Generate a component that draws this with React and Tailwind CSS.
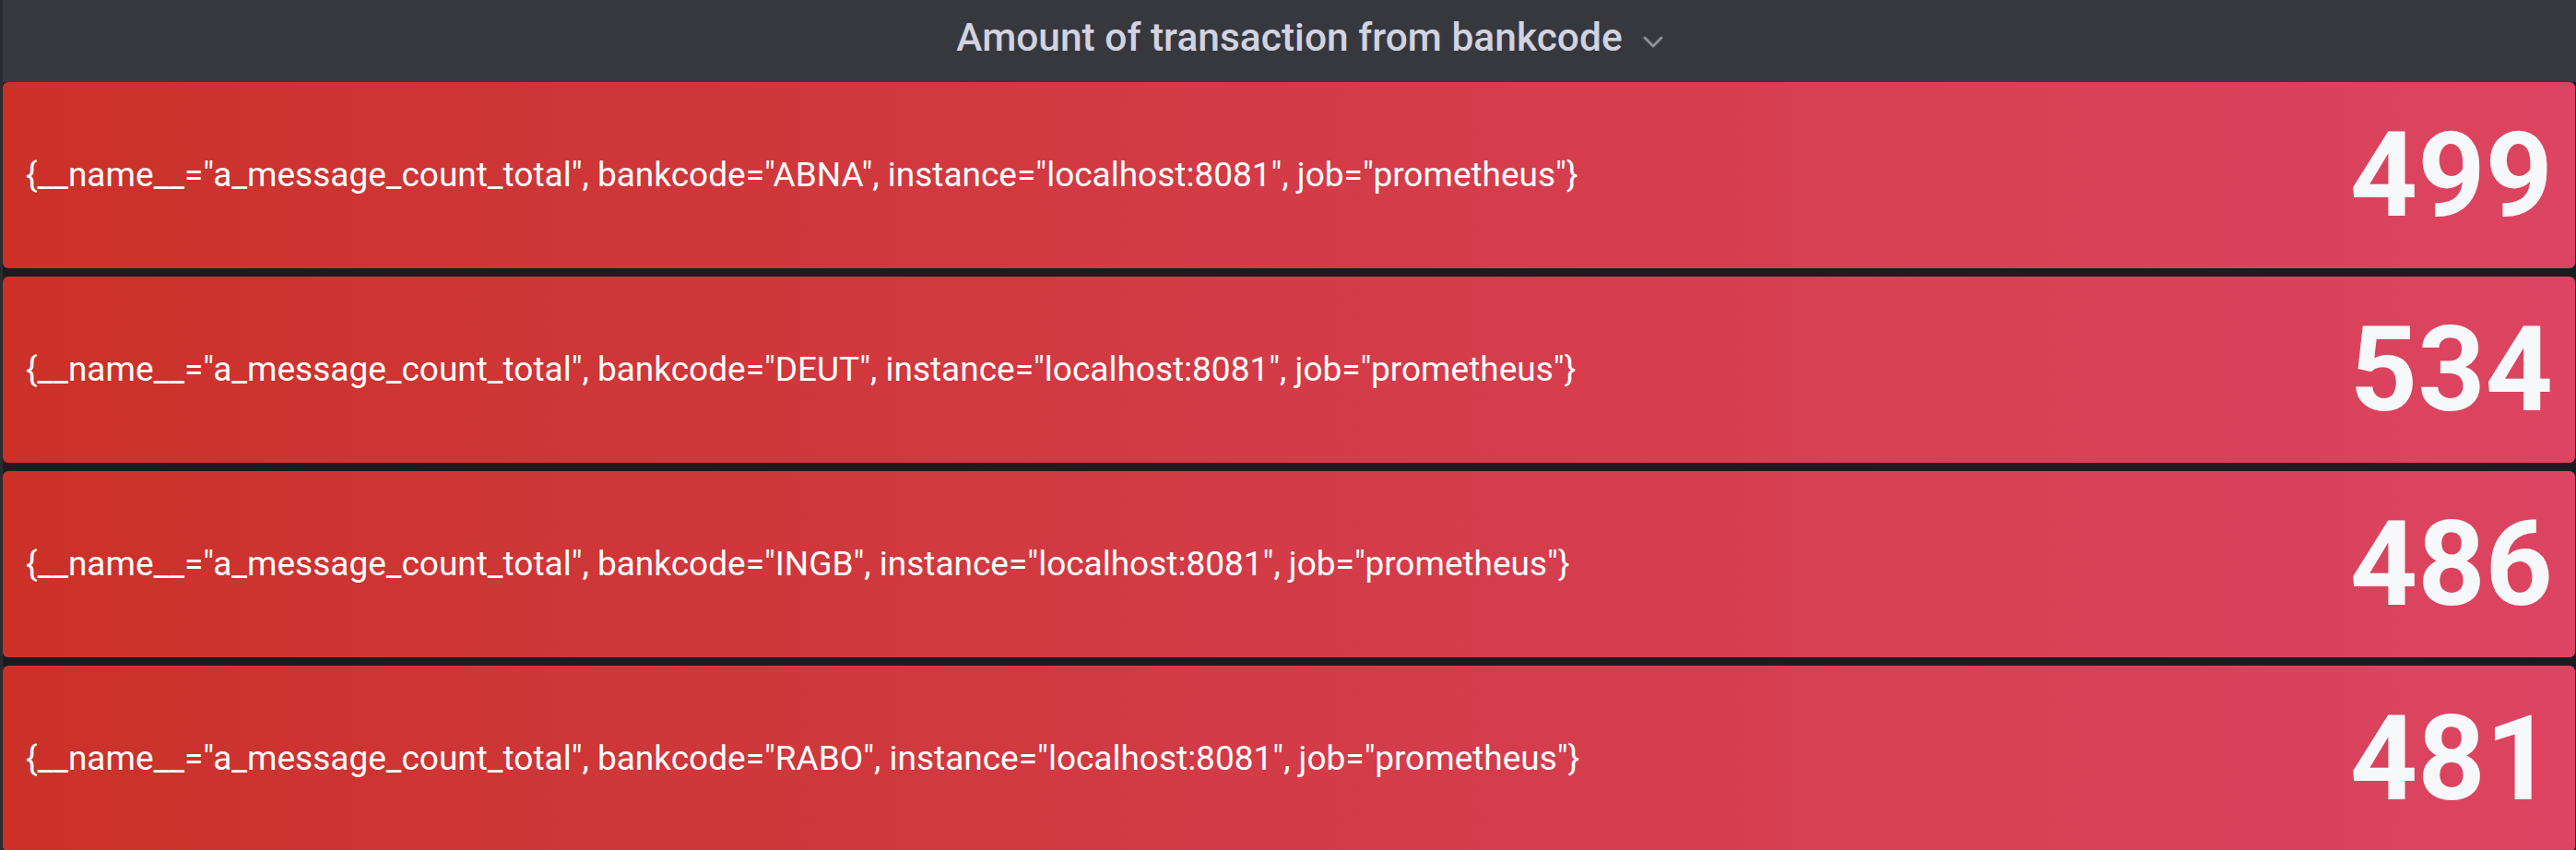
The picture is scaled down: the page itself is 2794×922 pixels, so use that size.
import React from "react";

const rows = [
  { code: "ABNA", value: "499" },
  { code: "DEUT", value: "534" },
  { code: "INGB", value: "486" },
  { code: "RABO", value: "481" },
];

export default function App() {
  return (
    <div className="w-[2794px] h-[922px] overflow-hidden bg-[#1b1c20] flex" style={{ fontFamily: "Roboto, 'Noto Sans', sans-serif" }}>
      <div className="w-[3px] shrink-0 bg-[#2a2b30]" />
      <div className="flex-1 flex flex-col">
        <div className="h-[89px] shrink-0 bg-[#37383e] flex items-center justify-center pb-[8px]">
          <span className="relative text-[42.5px] font-medium text-[#d2d3e0]">
            Amount of transaction from bankcode
            <svg className="absolute left-full top-1/2 ml-[22px] -translate-y-[2px]" width="22" height="13" viewBox="0 0 22 13" fill="none">
              <path d="M2 2 L11 11 L20 2" stroke="#8e8e96" strokeWidth="3" strokeLinecap="round" strokeLinejoin="round" />
            </svg>
          </span>
        </div>
        <div className="flex flex-col gap-[9px] pr-[1px]">
          {rows.map((r) => (
            <div
              key={r.code}
              className="h-[202px] rounded-[6px] bg-linear-to-r from-[#cb3128] to-[#dc4461] flex items-center justify-between pl-[25px] pr-[24px]"
            >
              <span className="text-[37px] text-white">
                {`{__name__="a_message_count_total", bankcode="${r.code}", instance="localhost:8081", job="prometheus"}`}
              </span>
              <span className="text-[128px] font-bold text-[#f7f8fa] leading-none">{r.value}</span>
            </div>
          ))}
        </div>
      </div>
    </div>
  );
}
